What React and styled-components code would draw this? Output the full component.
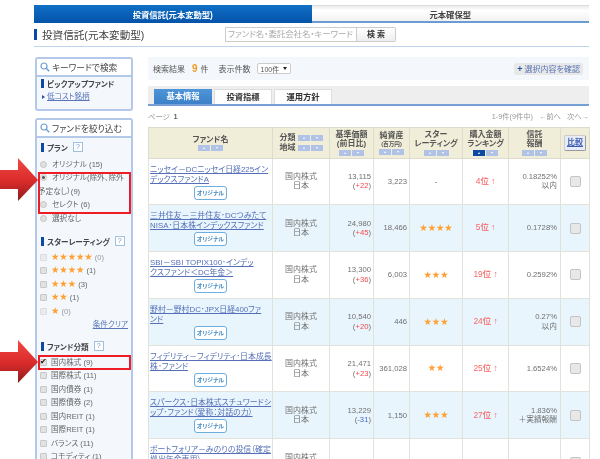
import React from 'react';
import styled, { createGlobalStyle } from 'styled-components';

const GlobalStyle = createGlobalStyle`
  html, body {
    margin: 0;
    padding: 0;
    background: #fff;
    overflow: hidden;
  }
  body {
    font-family: "Liberation Sans", "Noto Sans CJK JP", sans-serif;
    font-feature-settings: "palt";
    color: #666;
  }
`;

const Page = styled.div`
  position: relative;
  box-sizing: border-box;
  width: 600px;
  height: 459px;
  padding: 5px 11px 0 34px;
  overflow: hidden;
  filter: blur(0.4px);
`;

const TopTabs = styled.div`
  display: flex;
  height: 18px;
`;

const TopTab = styled.div`
  flex: 1;
  display: flex;
  align-items: center;
  justify-content: center;
  font-size: 8.3px;
  font-weight: 700;
  color: ${props => (props.$active ? '#fff' : '#444')};
  background: ${props => (props.$active
    ? 'linear-gradient(#0f6fc6, #0553a8)'
    : 'linear-gradient(#ececec, #fff 30%, #f2f2f2)')};
  border-top: ${props => (props.$active ? 'none' : '1px solid #ddd')};
  border-bottom: ${props => (props.$active ? 'none' : '2px solid #6c9bd2')};
  box-sizing: border-box;
`;

const TitleRow = styled.div`
  display: flex;
  align-items: center;
  height: 24px;
  border-bottom: 1px solid #bcd6ee;
  box-sizing: border-box;
`;

const TitleBar = styled.span`
  width: 3px;
  height: 11px;
  background: #0b4aa2;
  margin-right: 5px;
`;

const Title = styled.h1`
  margin: 0;
  width: 183px;
  font-size: 10.6px;
  font-weight: 400;
  color: #444;
`;

const SearchInput = styled.div`
  box-sizing: border-box;
  width: 132px;
  height: 15px;
  border: 1px solid #ccc;
  padding-left: 2px;
  font-size: 8.4px;
  line-height: 13px;
  color: #aaa;
  white-space: nowrap;
  overflow: hidden;
`;

const SearchButton = styled.div`
  box-sizing: border-box;
  width: 39px;
  height: 15px;
  border: 1px solid #ccc;
  border-left: none;
  border-radius: 0 2px 2px 0;
  background: linear-gradient(#fff, #eee);
  font-size: 8px;
  font-weight: 700;
  line-height: 13px;
  text-align: center;
  color: #333;
`;

const Columns = styled.div`
  display: flex;
  margin-top: 10px;
  gap: 15px;
  padding-left: 1px;
`;

const Sidebar = styled.aside`
  width: 98px;
  flex: none;
  display: flex;
  flex-direction: column;
  gap: 7px;
`;

const Panel = styled.section`
  box-sizing: border-box;
  border: 2px solid #b4c8e9;
  border-radius: 3px;
  background: #f4f8fd;
  height: ${props => props.$height};
`;

const PanelTitle = styled.div`
  display: flex;
  align-items: center;
  gap: 2px;
  height: 16px;
  padding-left: 3px;
  background: #fff;
  border-bottom: 2px solid #b4c8e9;
  font-size: 8.7px;
  color: #444;
  white-space: nowrap;
`;

const PanelBody = styled.div`
  padding: ${props => props.$top}px 1px 0;
`;

const GroupHeading = styled.div`
  display: flex;
  align-items: center;
  height: 13px;
  margin: ${props => props.$margin || '0'};
  padding-left: 3px;
  font-size: 7.6px;
  font-weight: 700;
  color: #444;
  white-space: nowrap;
`;

const GroupBar = styled.span`
  flex: none;
  width: 3px;
  height: 9px;
  background: #0b4aa2;
  margin-right: 3px;
`;

const HelpMark = styled.span`
  box-sizing: border-box;
  width: 10px;
  height: 10px;
  margin-left: 5px;
  border: 1px solid #9fc0de;
  background: #fff;
  color: #6b93c4;
  font-size: 7px;
  font-weight: 400;
  line-height: 8px;
  text-align: center;
`;

const Option = styled.div`
  padding-left: 2px;
  font-size: 7.6px;
  line-height: 13.5px;
  color: ${props => (props.$muted ? '#999' : '#666')};
  white-space: nowrap;
`;

const WrappedLine = styled.div`
  margin-left: -2px;
`;

const Highlight = styled.div`
  position: relative;
  &::after {
    content: "";
    position: absolute;
    inset: ${props => props.$inset};
    border: 2px solid #ee1c25;
    pointer-events: none;
  }
`;

const Radio = styled.span`
  display: inline-block;
  box-sizing: border-box;
  width: 7px;
  height: 7px;
  margin-right: 5px;
  border: 1px solid #c4c4c4;
  border-radius: 50%;
  background: ${props => (props.$checked
    ? 'radial-gradient(circle, #555 0 1.1px, #e4e4e4 1.7px)'
    : '#e0e0e0')};
  vertical-align: -1px;
`;

const Check = styled.span`
  display: inline-block;
  box-sizing: border-box;
  width: 7px;
  height: 7px;
  margin-right: 4px;
  border: 1px solid #c8c8c8;
  border-radius: 1px;
  background: #e2e2e2;
  opacity: ${props => (props.$muted ? 0.55 : 1)};
  vertical-align: -1px;
  position: relative;
  &::after {
    content: ${props => (props.$checked ? '"✔"' : 'none')};
    position: absolute;
    left: -1px;
    top: -4px;
    font-size: 8px;
    line-height: 12px;
    color: #111;
  }
`;

const Stars = styled.span`
  font-family: "DejaVu Sans", sans-serif;
  font-size: 9.3px;
  line-height: 1;
  color: #ffa033;
`;

const ClearLink = styled.div`
  padding-right: 2px;
  font-size: 7.6px;
  line-height: 14px;
  text-align: right;
  color: #5a76b8;
  text-decoration: underline;
`;

const PickupLink = styled.a`
  display: block;
  padding-left: 4px;
  font-size: 7.6px;
  line-height: 13px;
  color: #5a76b8;
  text-decoration: underline;
  &::before {
    content: "";
    display: inline-block;
    margin-right: 2px;
    border: 2px solid transparent;
    border-left: 3px solid #24509c;
    border-right: none;
  }
`;

const Main = styled.main`
  flex: 1;
  min-width: 0;
`;

const ResultBar = styled.div`
  display: flex;
  align-items: center;
  height: 23px;
  padding: 0 6px 0 5px;
  background: #f4f8fc;
  font-size: 8px;
  color: #555;
`;

const Count = styled.b`
  margin: 0 3px 0 7px;
  font-size: 10px;
  color: #f09a22;
`;

const PerPage = styled.span`
  margin-left: 10px;
`;

const Select = styled.span`
  box-sizing: border-box;
  display: inline-flex;
  align-items: center;
  justify-content: space-between;
  width: 34px;
  height: 11px;
  margin-left: 6px;
  padding: 0 3px;
  border: 1px solid #ccc;
  border-radius: 2px;
  background: #fff;
  font-size: 7px;
  &::after {
    content: "";
    border: 2px solid transparent;
    border-top: 3px solid #222;
    border-bottom: none;
  }
`;

const ConfirmButton = styled.span`
  margin-left: auto;
  display: flex;
  align-items: center;
  height: 12px;
  padding: 0 3px;
  border-radius: 2px;
  background: #e8e8e8;
  color: #5876b6;
  font-size: 8px;
  white-space: nowrap;
  & > b {
    margin-right: 2px;
    font-size: 9px;
    color: #24509c;
  }
`;

const TabBand = styled.div`
  display: flex;
  align-items: flex-end;
  gap: 2px;
  box-sizing: border-box;
  height: 20px;
  margin-top: 6px;
  padding-left: 6px;
  background: #eee;
  border-bottom: 2px solid #74a0d6;
`;

const ContentTab = styled.div`
  box-sizing: border-box;
  width: 58px;
  height: 15px;
  font-size: 8.3px;
  font-weight: 700;
  text-align: center;
  border: ${props => (props.$active ? 'none' : '1px solid #ddd')};
  border-bottom: none;
  color: ${props => (props.$active ? '#fff' : '#333')};
  background: ${props => (props.$active ? 'linear-gradient(#4d95d8, #3d80c8)' : '#fff')};
  line-height: ${props => (props.$active ? '15px' : '14px')};
`;

const PagerRow = styled.div`
  box-sizing: border-box;
  display: flex;
  justify-content: space-between;
  align-items: center;
  height: 21px;
  padding-bottom: 2px;
  font-size: 7.3px;
  color: #999;
  & b {
    margin-left: 4px;
    color: #666;
  }
  & span + span {
    margin-left: 6px;
  }
`;

const Table = styled.table`
  width: 441px;
  table-layout: fixed;
  border-collapse: collapse;
  font-size: 8px;
  color: #707070;
`;

const HeadCell = styled.th`
  height: 29.5px;
  padding: 0;
  border: 1px solid #dddccf;
  background: #f0edd8;
  font-size: 8px;
  font-weight: 700;
  line-height: 9.5px;
  color: #555;
  text-align: center;
  vertical-align: middle;
`;

const SmallUnit = styled.div`
  font-size: 5.6px;
  line-height: 7px;
`;

const SortPair = styled.div`
  display: ${props => (props.$inline ? 'inline-flex' : 'flex')};
  justify-content: center;
  gap: 1px;
  margin: ${props => (props.$inline ? '0 0 0 2px' : '1px 0 0')};
  vertical-align: middle;
`;

const SortButton = styled.span`
  display: flex;
  align-items: center;
  justify-content: center;
  width: 12px;
  height: 6px;
  background: ${props => (props.$active ? '#0b4aa2' : '#b0c2e5')};
  &::after {
    content: "";
    border: 1.5px solid transparent;
    ${props => (props.$down
      ? 'border-top: 2px solid #fff; border-bottom: none;'
      : 'border-bottom: 2px solid #fff; border-top: none;')}
  }
`;

const HeadLine = styled.div`
  display: flex;
  align-items: center;
  justify-content: center;
  height: 10.5px;
`;

const CompareButton = styled.span`
  display: inline-block;
  padding: 2px;
  border: 1px solid #ccc;
  border-right-color: #999;
  border-bottom-color: #999;
  border-radius: 2px;
  background: #e8ecf8;
  color: #3f5eb0;
  font-size: 8px;
  text-decoration: underline;
`;

const Row = styled.tr`
  background: ${props => (props.$tinted ? '#e8f5fd' : '#fff')};
`;

const Cell = styled.td`
  height: 46.8px;
  box-sizing: border-box;
  padding: 0;
  border: 1px solid #e2e2dc;
  line-height: 9.5px;
  text-align: center;
  vertical-align: middle;
  white-space: nowrap;
  overflow: hidden;
`;

const NumberCell = styled(Cell)`
  padding-right: ${props => props.$right || 2}px;
  font-size: 7.7px;
  text-align: right;
`;

const NameCell = styled(Cell)`
  padding: 6px 1px 0;
  vertical-align: top;
`;

const FundName = styled.a`
  display: block;
  font-size: 7.9px;
  line-height: 10px;
  text-align: left;
  color: #5570b8;
  text-decoration: underline;
`;

const PlanBadge = styled.span`
  display: block;
  box-sizing: border-box;
  height: 14px;
  width: 33px;
  margin: 1px auto 0;
  border: 1px solid #6caede;
  border-radius: 3px;
  background: #fff;
  font-size: 5.8px;
  font-weight: 700;
  line-height: 12px;
  color: #4a8cc0;
`;

const Change = styled.span`
  color: ${props => (props.$down ? '#4a6ad0' : '#f24a4a')};
`;

const Rank = styled.span`
  font-size: 8.4px;
  font-weight: 500;
  color: #f76666;
  & > i {
    font-style: normal;
    font-weight: 400;
  }
`;

const CompareBox = styled.span`
  display: inline-block;
  box-sizing: border-box;
  width: 11px;
  height: 11px;
  border: 1px solid #c4c4c4;
  border-radius: 2px;
  background: #e8e8e8;
  vertical-align: middle;
`;

const ArrowMark = styled.svg`
  position: absolute;
  left: 0;
  top: ${props => props.$top}px;
`;

const SearchIconMark = styled.svg`
  flex: none;
`;

const planOptions = [
  { label: 'オリジナル (15)' },
  { label: 'オリジナル(除外、除外', wrapped: '予定なし）(9)' },
  { label: 'セレクト (6)' },
  { label: '選択なし' },
];

const starOptions = [
  { stars: 5, count: 0 },
  { stars: 4, count: 1 },
  { stars: 3, count: 3 },
  { stars: 2, count: 1 },
  { stars: 1, count: 0 },
];

const fundTypes = [
  '国際株式 (11)',
  '国内債券 (1)',
  '国際債券 (2)',
  '国内REIT (1)',
  '国際REIT (1)',
  'バランス (11)',
  'コモディティ (1)',
];

const funds = [
  { name: ['ニッセイ－DCニッセイ日経225イン', 'デックスファンドA'], price: '13,115', change: '+22', assets: '3,223', stars: 0, rank: 4, fee: ['0.18252%', '以内'] },
  { name: ['三井住友－三井住友･DCつみたて', 'NISA･日本株インデックスファンド'], price: '24,980', change: '+45', assets: '18,466', stars: 4, rank: 5, fee: ['0.1728%'] },
  { name: ['SBI－SBI TOPIX100･インデッ', 'クスファンド＜DC年金＞'], price: '13,300', change: '+36', assets: '6,003', stars: 3, rank: 19, fee: ['0.2592%'] },
  { name: ['野村－野村DC･JPX日経400ファ', 'ンド'], price: '10,540', change: '+20', assets: '446', stars: 3, rank: 24, fee: ['0.27%', '以内'] },
  { name: ['フィデリティ－フィデリティ･日本成長', '株･ファンド'], price: '21,471', change: '+23', assets: '361,028', stars: 2, rank: 25, fee: ['1.6524%'] },
  { name: ['スパークス･日本株式スチュワードシ', 'ップ･ファンド（愛称：対話の力）'], price: '13,229', change: '-31', assets: '1,150', stars: 3, rank: 27, fee: ['1.836%', '＋実績報酬'] },
  { name: ['ポートフォリア－みのりの投信（確定', '拠出年金専用）'], price: '11,609', fee: ['1.674%'] },
];

const SearchIcon = () => (
  <SearchIconMark width="10" height="10" viewBox="0 0 10 10" fill="none" stroke="#6c9bd2" strokeWidth="1.2">
    <circle cx="4" cy="4" r="3" />
    <path d="M6.3 6.3 L9.2 9.2" strokeWidth="1.5" />
  </SearchIconMark>
);

const SortButtons = ({ inline, active }) => (
  <SortPair $inline={inline}>
    <SortButton $active={active} />
    <SortButton $down />
  </SortPair>
);

const RedArrow = ({ top, id }) => (
  <ArrowMark $top={top} width="39" height="44" viewBox="0 0 39 44">
    <defs>
      <linearGradient id={id} x1="0" y1="0" x2="0" y2="1">
        <stop offset="0" stopColor="#f04a44" />
        <stop offset="0.55" stopColor="#d92a2a" />
        <stop offset="1" stopColor="#8e1c1c" />
      </linearGradient>
    </defs>
    <polygon points="0,12 18,12 18,0 38,22 18,43 18,31 0,31" fill={`url(#${id})`} />
  </ArrowMark>
);

const App = () => (
  <Page>
    <GlobalStyle />
    <TopTabs>
      <TopTab $active>投資信託(元本変動型)</TopTab>
      <TopTab>元本確保型</TopTab>
    </TopTabs>
    <TitleRow>
      <TitleBar />
      <Title>投資信託(元本変動型)</Title>
      <SearchInput>ファンド名・委託会社名・キーワード</SearchInput>
      <SearchButton>検 索</SearchButton>
    </TitleRow>
    <Columns>
      <Sidebar>
        <Panel $height="54px">
          <PanelTitle>
            <SearchIcon />
            キーワードで検索
          </PanelTitle>
          <PanelBody $top={0}>
            <GroupHeading><GroupBar />ピックアップファンド</GroupHeading>
            <PickupLink>低コスト銘柄</PickupLink>
          </PanelBody>
        </Panel>
        <Panel $height="400px">
          <PanelTitle>
            <SearchIcon />
            ファンドを絞り込む
          </PanelTitle>
          <PanelBody $top={2.5}>
            <GroupHeading $margin="0 0 4px"><GroupBar />プラン<HelpMark>?</HelpMark></GroupHeading>
            <Option>
              <Radio />{planOptions[0].label}
            </Option>
            <Highlight $inset="1px -1px -2px 0">
              <Option>
                <Radio $checked />{planOptions[1].label}
                <WrappedLine>{planOptions[1].wrapped}</WrappedLine>
              </Option>
              <Option>
                <Radio />{planOptions[2].label}
              </Option>
            </Highlight>
            <Option>
              <Radio />{planOptions[3].label}
            </Option>
            <GroupHeading $margin="9.5px 0 3px"><GroupBar />スターレーティング<HelpMark>?</HelpMark></GroupHeading>
            {starOptions.map(item => (
              <Option key={item.stars} $muted={item.count === 0}>
                <Check $muted={item.count === 0} />
                <Stars>{'★'.repeat(item.stars)}</Stars> ({item.count})
              </Option>
            ))}
            <ClearLink>条件クリア</ClearLink>
            <GroupHeading $margin="7.5px 0 3px"><GroupBar />ファンド分類<HelpMark>?</HelpMark></GroupHeading>
            <Highlight $inset="-1px -1px -1px 0">
              <Option>
                <Check $checked />国内株式 (9)
              </Option>
            </Highlight>
            {fundTypes.map(label => (
              <Option key={label}>
                <Check />{label}
              </Option>
            ))}
          </PanelBody>
        </Panel>
      </Sidebar>
      <Main>
        <ResultBar>
          検索結果<Count>9</Count>件
          <PerPage>表示件数</PerPage>
          <Select>100件</Select>
          <ConfirmButton><b>+</b>選択内容を確認</ConfirmButton>
        </ResultBar>
        <TabBand>
          <ContentTab $active>基本情報</ContentTab>
          <ContentTab>投資指標</ContentTab>
          <ContentTab>運用方針</ContentTab>
        </TabBand>
        <PagerRow>
          <div>ページ<b>1</b></div>
          <div>
            <span>1-9件(9件中)</span>
            <span>←前へ</span>
            <span>次へ→</span>
          </div>
        </PagerRow>
        <Table>
          <colgroup>
            {[124, 57, 44, 36, 53, 46, 52, 29].map((w, i) => <col key={i} width={w} />)}
          </colgroup>
          <thead>
            <tr>
              <HeadCell>ファンド名<SortButtons /></HeadCell>
              <HeadCell>
                <HeadLine>分類<SortButtons inline /></HeadLine>
                <HeadLine>地域<SortButtons inline /></HeadLine>
              </HeadCell>
              <HeadCell>基準価額<br />(前日比)<SortButtons /></HeadCell>
              <HeadCell>純資産<SmallUnit>(百万円)</SmallUnit><SortButtons /></HeadCell>
              <HeadCell>スター<br />レーティング<SortButtons /></HeadCell>
              <HeadCell>購入金額<br />ランキング<SortButtons active /></HeadCell>
              <HeadCell>信託<br />報酬<SortButtons /></HeadCell>
              <HeadCell><CompareButton>比較</CompareButton></HeadCell>
            </tr>
          </thead>
          <tbody>
            {funds.map((fund, i) => (
              <Row key={fund.price} $tinted={i % 2 === 1}>
                <NameCell>
                  <FundName>{fund.name[0]}<br />{fund.name[1]}</FundName>
                  <PlanBadge>オリジナル</PlanBadge>
                </NameCell>
                <Cell>国内株式<br />日本</Cell>
                <NumberCell>
                  {fund.price}
                  {fund.change && <br />}
                  {fund.change && <>(<Change $down={fund.change[0] === '-'}>{fund.change}</Change>)</>}
                </NumberCell>
                <NumberCell>{fund.assets}</NumberCell>
                <Cell>{fund.rank && (fund.stars ? <Stars>{'★'.repeat(fund.stars)}</Stars> : '-')}</Cell>
                <Cell>{fund.rank && <Rank>{fund.rank}位 <i>↑</i></Rank>}</Cell>
                <NumberCell $right={3}>
                  {fund.fee[0]}{fund.fee[1] && <br />}{fund.fee[1]}
                </NumberCell>
                <Cell><CompareBox /></Cell>
              </Row>
            ))}
          </tbody>
        </Table>
      </Main>
    </Columns>
    <RedArrow id="arrow-plan" top={158} />
    <RedArrow id="arrow-type" top={340} />
  </Page>
);

export default App;
